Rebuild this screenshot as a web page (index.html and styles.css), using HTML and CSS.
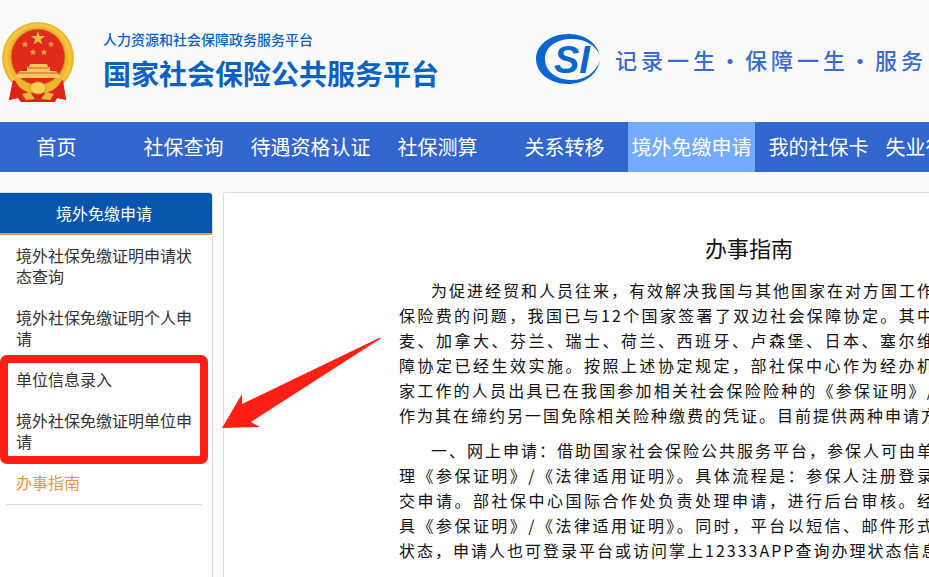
FILE: index.html
```html
<!DOCTYPE html>
<html lang="zh-CN">
<head>
    <meta charset="UTF-8">
    <meta name="viewport" content="width=device-width, initial-scale=1.0">
    <title>国家社会保险公共服务平台</title>
    <link rel="stylesheet" href="styles.css">
</head>
<body>
    <header class="header">
        <svg class="emblem" viewBox="0 0 72 82" width="72" height="82" aria-hidden="true">
            <path d="M11 60 L60 60 L64 78 L55 77 L53 80 L18 80 L16 77 L7 79 Z" fill="#d9201a"/>
            <ellipse cx="36" cy="37" rx="36" ry="36" fill="#eeb62f"/>
            <ellipse cx="36" cy="37" rx="32" ry="33" fill="none" stroke="#f4c644" stroke-width="3"/>
            <ellipse cx="36" cy="36" rx="27" ry="28" fill="#e02a1c" stroke="#c98d20"/>
            <path d="M11 59 C20 62 28 66 36 71 C44 66 52 62 61 59 L64 79 L55 77 L53 81 L19 81 L16 77 L7 79 Z" fill="#dc2419"/>
            <polygon points="36,10 37.6,15 43,15 38.8,18.4 40.4,23.5 36,20.4 31.6,23.5 33.2,18.4 29,15 34.4,15" fill="#f0b843"/>
            <g fill="#f0a03a">
                <polygon points="23,20 24,22 26,22 24.5,24 25,26 23,25 21,26 21.5,24 20,22 22,22"/>
                <polygon points="49,20 50,22 52,22 50.5,24 51,26 49,25 47,26 47.5,24 46,22 48,22"/>
                <polygon points="31,28 32,30 34,30 32.5,32 33,34 31,33 29,34 29.5,32 28,30 30,30"/>
                <polygon points="42,28 43,30 45,30 43.5,32 44,34 42,33 40,34 40.5,32 39,30 41,30"/>
            </g>
            <path d="M28 43 H45 L46 46 H48 V50 H54 L60 57 H12 L18 50 H25 V46 H27 Z" fill="#f6c75a"/>
            <path d="M26 47 H47 M14 52 H58" stroke="#e0552a"/>
            <path d="M12 56 Q24 60 29 66 Q36 58 44 66 Q49 60 61 56 Q56 70 42 72 L36 68 L30 72 Q16 70 12 56 Z" fill="#efb52d"/>
            <ellipse cx="36" cy="67" rx="8" ry="6" fill="#f6cf57" stroke="#d79b22"/>
            <path d="M20 73 L28 71 L33 78 L24 79 Z M52 73 L44 71 L39 78 L48 79 Z" fill="#eeb636"/>
        </svg>
        <div class="site-name">
            <p class="site-sub">人力资源和社会保障政务服务平台</p>
            <h1 class="site-title">国家社会保险公共服务平台</h1>
        </div>
        <svg class="si-logo" viewBox="0 0 64 50" width="64" height="50" role="img" aria-label="SI">
            <path fill-rule="evenodd" d="M64 22 C61 8 48 0 32 0 C14 0 0 11 0 25 C0 39 14 50 32 50 C48 50 61 41 64 27 C60 38 49 46 36 46 C20 46 9 37 9 25 C9 13 20 5 36 5 C49 5 60 11 64 22 Z" fill="#0b67cf"/>
            <text class="si-text" x="18" y="39">SI</text>
        </svg>
        <p class="slogan">记录一生・保障一生・服务</p>
    </header>

    <nav class="nav">
        <a href="#">首页</a>
        <a href="#">社保查询</a>
        <a href="#">待遇资格认证</a>
        <a href="#">社保测算</a>
        <a href="#">关系转移</a>
        <a href="#" class="active">境外免缴申请</a>
        <a href="#">我的社保卡</a>
        <a href="#">失业待遇申领</a>
    </nav>

    <div class="container">
        <aside class="sidebar">
            <h2 class="sidebar-title">境外免缴申请</h2>
            <ul class="menu">
                <li><a href="#">境外社保免缴证明申请状态查询</a></li>
                <li><a href="#">境外社保免缴证明个人申请</a></li>
                <li><a href="#">单位信息录入</a></li>
                <li><a href="#">境外社保免缴证明单位申请</a></li>
                <li><a href="#" class="current">办事指南</a></li>
            </ul>
            <div class="mark-box"></div>
            <svg class="mark-arrow" viewBox="0 0 160 92" width="160" height="92" aria-hidden="true">
                <path d="M0 91 L20 57 L20 67 L157 1 Q160 0 158 2 L29 85 L38 90 Z" fill="#ff2015"/>
            </svg>
        </aside>

        <main class="content">
            <h2 class="content-title">办事指南</h2>
            <p>为促进经贸和人员往来，有效解决我国与其他国家在对方国工作<br>
            保险费的问题，我国已与12个国家签署了双边社会保障协定。其中<br>
            麦、加拿大、芬兰、瑞士、荷兰、西班牙、卢森堡、日本、塞尔维<br>
            障协定已经生效实施。按照上述协定规定，部社保中心作为经办机<br>
            家工作的人员出具已在我国参加相关社会保险险种的《参保证明》/<br>
            作为其在缔约另一国免除相关险种缴费的凭证。目前提供两种申请方</p>
            <p>一、网上申请：借助国家社会保险公共服务平台，参保人可由单<br>
            理《参保证明》/《法律适用证明》。具体流程是：参保人注册登录<br>
            交申请。部社保中心国际合作处负责处理申请，进行后台审核。经<br>
            具《参保证明》/《法律适用证明》。同时，平台以短信、邮件形式<br>
            状态，申请人也可登录平台或访问掌上12333APP查询办理状态信息</p>
        </main>
    </div>
</body>
</html>
```

FILE: styles.css
```css
* {
    box-sizing: border-box;
}
body {
    font-family: "Noto Sans CJK SC", sans-serif;
    margin: 0;
    background-color: #fafafa;
    color: #333;
    min-height: 100vh;
    display: flex;
    flex-direction: column;
    overflow: hidden;
}
h1, h2, p, ul {
    margin: 0;
    padding: 0;
}
a {
    text-decoration: none;
    color: inherit;
}

/* header */
.header {
    display: flex;
    align-items: center;
    height: 122px;
    padding-left: 2px;
    white-space: nowrap;
}
.emblem {
    flex: none;
    margin-top: 2px;
    margin-right: 29px;
}
.site-name {
    flex: none;
    color: #0b62c4;
    margin-right: 97px;
}
.site-sub {
    font-size: 14px;
    font-weight: 500;
    line-height: 24px;
}
.site-title {
    font-size: 28px;
    font-weight: bold;
    line-height: 44px;
}
.si-logo {
    flex: none;
    margin-right: 15px;
    margin-bottom: 4px;
}
.si-text {
    font-family: "Liberation Sans", sans-serif;
    font-size: 38px;
    font-weight: bold;
    font-style: italic;
    fill: #0b67cf;
}
.slogan {
    font-size: 22px;
    font-weight: 500;
    letter-spacing: 4px;
    margin-bottom: 4px;
    color: #3a6bcb;
}

/* nav */
.nav {
    display: flex;
    margin-left: -7px;
    background-color: #3366cc;
}
.nav a {
    flex: 0 0 127px;
    font-size: 20px;
    line-height: 50px;
    text-align: center;
    color: #fff;
    white-space: nowrap;
}
.nav a.active {
    background-color: #75abff;
}

.container {
    display: flex;
    flex: 1;
    gap: 10px;
    padding-top: 20px;
}

/* sidebar */
.sidebar {
    position: relative;
    flex: 0 0 213px;
    background-color: #fff;
    border: 1px solid #ddd;
    border-width: 1px 1px 0 0;
    border-radius: 0 3px 0 0;
}
.sidebar-title {
    font-size: 16px;
    font-weight: normal;
    line-height: 40px;
    text-align: center;
    padding-right: 4px;
    color: #fff;
    background-color: #0556ac;
    border-bottom: 2px solid #d99a4e;
    border-radius: 0 3px 0 0;
}
.menu {
    list-style: none;
    margin: 0 10px 0 6px;
    padding-bottom: 1px;
    border-bottom: 1px solid #ddd;
}
.menu a {
    display: block;
    padding: 10px;
    font-size: 16px;
    line-height: 21px;
}
.menu a.current {
    color: #e8963c;
}

/* red marks over the menu */
.mark-box {
    position: absolute;
    top: 162px;
    left: 0;
    width: 208px;
    height: 109px;
    border: 8px solid #ff2015;
    border-radius: 7px;
}
.mark-arrow {
    position: absolute;
    top: 144px;
    left: 222px;
    z-index: 1;
}

/* content */
.content {
    flex: 1;
    min-width: 0;
    padding: 38px 0 0 175px;
    background-color: #fff;
    border: 1px solid #ddd;
    border-width: 1px 0 0 1px;
    border-radius: 3px 0 0 0;
    color: #111;
}
.content-title {
    font-size: 22px;
    font-weight: normal;
    line-height: 32px;
    padding-left: 306px;
    margin-bottom: 15px;
}
.content p {
    margin: 0 -6px 10px 0;
    font-size: 16px;
    line-height: 25px;
    letter-spacing: 2px;
    text-indent: 32px;
    text-align: justify;
    text-align-last: justify;
    white-space: nowrap;
}
```
